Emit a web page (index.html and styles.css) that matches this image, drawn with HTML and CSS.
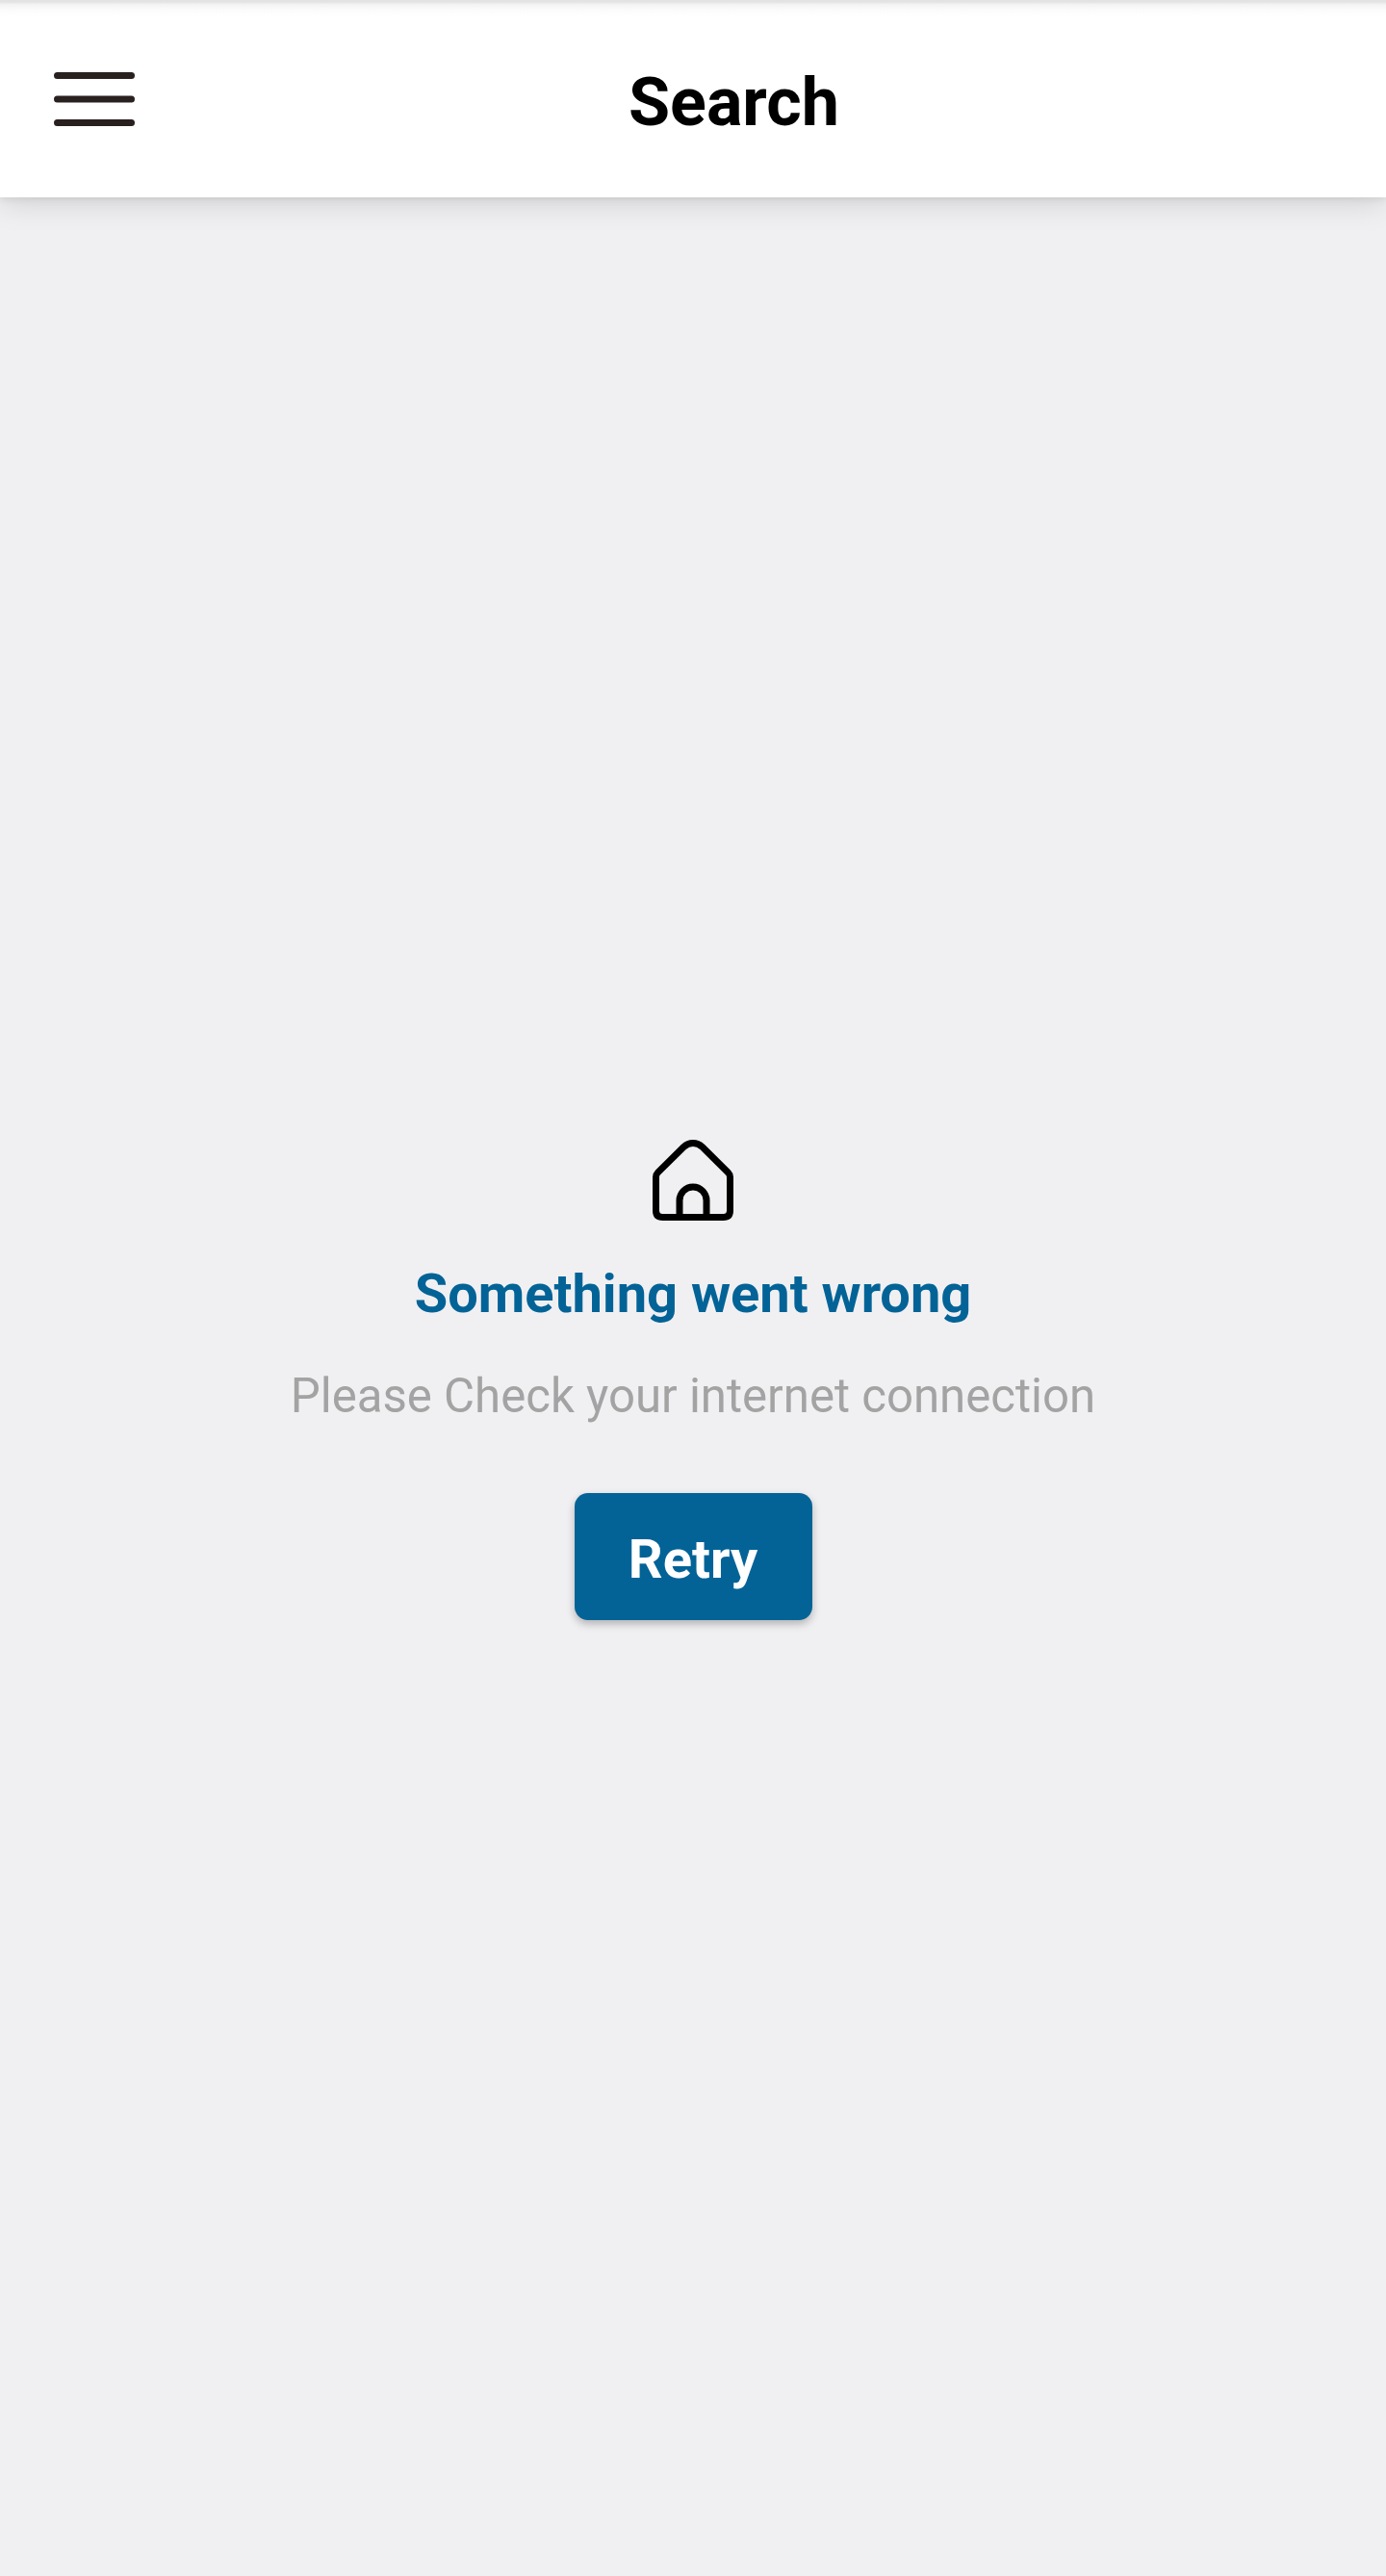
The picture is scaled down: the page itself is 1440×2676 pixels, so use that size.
FILE: index.html
```html
<!DOCTYPE html>
<html lang="en">
<head>
<meta charset="utf-8">
<title>Search</title>
<link rel="stylesheet" href="styles.css">
</head>
<body>
<div class="screen">
  <header class="app-bar">
    <button class="menu-button" aria-label="Menu">
      <svg class="menu-icon" viewBox="0 0 84 56"><path d="M3.5 3.5h77M3.5 28h77M3.5 52.5h77"/></svg>
    </button>
    <h1 class="title">Search</h1>
  </header>
  <main class="error">
    <svg class="home-icon" viewBox="0 0 84 84"><path d="M3.500 38.700Q3.500 36 5.600 33.900L32.300 7.500Q36.500 3.500 42 3.500T51.700 7.500L78.400 33.900Q80.500 36 80.500 38.700V73.500Q80.500 80.500 73.500 80.500H10.500Q3.500 80.500 3.500 73.500ZM28 80.500V63a14 14 0 0 1 28 0V80.500"/></svg>
    <h2 class="heading">Something went wrong</h2>
    <p class="message">Please Check your internet connection</p>
    <button class="retry">Retry</button>
  </main>
</div>
</body>
</html>
```
FILE: styles.css
```css
* { box-sizing: border-box; }
body { margin: 0; font-family: Roboto, sans-serif; }
h1, h2, p { margin: 0; }
button { border: 0; padding: 0; font-family: inherit; }
.screen { height: 2676px; background: #f0f0f2; display: flex; flex-direction: column; overflow: hidden; }
.app-bar {
  height: 205px;
  display: grid;
  grid-template-columns: 84px 1fr;
  align-items: center;
  padding-left: 56px;
  background: linear-gradient(#e2e2e2, #e4e4e4 2px, #f4f4f4 5px, #fbfbfb 10px, #fff 18px);
  box-shadow: 0 2px 8px rgba(0, 0, 0, .08), 0 6px 30px rgba(0, 0, 0, .13);
}
.menu-button { background: none; height: 56px; }
.menu-icon { display: block; width: 84px; height: 56px; fill: none; stroke: #29211f; stroke-width: 7; stroke-linecap: round; }
.title { padding: 6px 0 0 513px; font-size: 70px; line-height: 82px; font-weight: 700; color: #000; }
.error { display: flex; flex-direction: column; align-items: center; padding-top: 979px; }
.home-icon { width: 84px; height: 84px; fill: none; stroke: #000; stroke-width: 7; stroke-linejoin: round; }
.heading { margin-top: 43px; font-size: 56px; line-height: 66px; font-weight: 700; color: #036397; }
.message { margin-top: 44px; font-size: 49.15px; line-height: 58px; color: #a3a3a4; }
.retry {
  margin-top: 72px;
  padding-top: 5px;
  width: 247px;
  height: 132px;
  border-radius: 14px;
  background: #036397;
  box-shadow: 0 4px 8px rgba(0, 0, 0, .26);
  color: #fff;
  font-size: 56px;
  font-weight: 700;
}
```
